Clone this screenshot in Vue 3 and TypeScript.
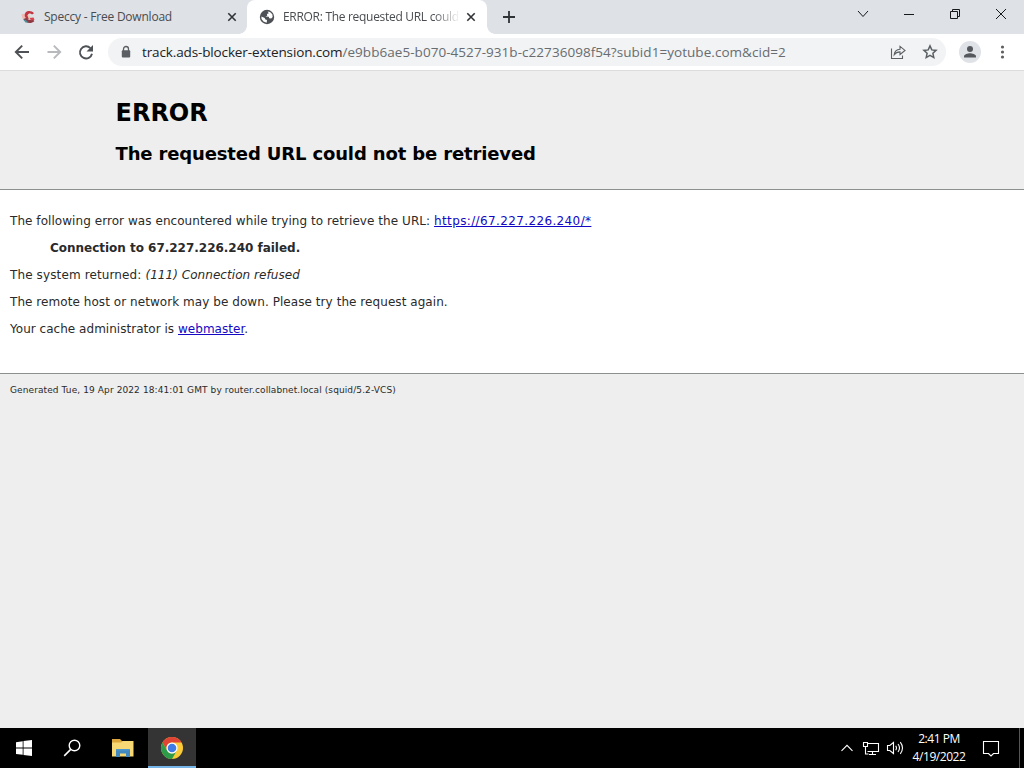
<script setup lang="ts">
interface Tab {
  title: string
  active: boolean
}

const tabs: Tab[] = [
  { title: 'Speccy - Free Download', active: false },
  { title: 'ERROR: The requested URL could', active: true },
]
const host = 'track.ads-blocker-extension.com'
const path = '/e9bb6ae5-b070-4527-931b-c22736098f54?subid1=yotube.com&cid=2'
</script>

<template>
  <div class="screen">
    <header class="tabstrip">
      <div v-for="tab in tabs" :key="tab.title" class="tab" :class="{ active: tab.active }">
        <svg v-if="tab.active" class="favicon" viewBox="0 0 16 16">
          <circle cx="8" cy="8" r="7.2" fill="#4d5156" />
          <path d="M8.600 2.500 9.800 4.300 8 5 8.200 6.800 6.400 7.400 9.800 7.800 10.200 9.300 12.200 9.600 13.700 8 13.300 5.200 11 2.900ZM2.400 7.500 5.800 9 6.100 10.200 8 11 7.700 13.700 4.500 12.500 2.500 10Z" fill="#fff" />
        </svg>
        <svg v-else class="favicon" viewBox="0 0 16 16">
          <path d="M1.500 5.500 5 4.500 5.500 11 2.500 9.500Z" fill="#efb9b4" />
          <path d="M14 4.300C12 1.600 7 1 5.300 4 4 6.500 5 9.500 8 10.200L9.500 8.300C7.300 7.600 7.200 5.600 8.500 4.900 9.800 4.200 11.300 4.600 12 5.600Z" fill="#c23542" />
          <path d="M7.500 6.300 9.500 5.800 10.500 8.500 8.300 9Z" fill="#e8d3b0" />
          <path d="M3.500 10C5.500 14.500 11 15.300 14.300 12.300L13 10.300C10.500 11.800 8 11 6.500 8.800Z" fill="#8e3943" />
          <path d="M9.500 9 13.500 8.600 14.500 10.800 11 11.500Z" fill="#d7424d" />
          <path d="M3 10.300 5.500 10.800 8.500 13.600 5.500 13.400Z" fill="#489198" />
        </svg>
        <span class="tab-title">{{ tab.title }}</span>
        <svg class="tab-close" viewBox="0 0 10 10"><path d="m1.300 1.300 7.400 7.400m0-7.400-7.400 7.400" /></svg>
      </div>
      <svg class="new-tab" viewBox="0 0 14 14"><path d="M7 1v12M1 7h12" /></svg>
      <div class="window-controls">
        <svg viewBox="0 0 46 34"><path d="m18 11 5 5.500 5-5.500" /></svg>
        <svg viewBox="0 0 46 34"><path d="M18 14.500h10" /></svg>
        <svg viewBox="0 0 46 34"><path d="M18.500 11.500h7v7h-7zM20.500 11.500v-2h7v7h-2" /></svg>
        <svg viewBox="0 0 46 34"><path d="m18 9 10 10m0-10L18 19" /></svg>
      </div>
    </header>

    <nav class="toolbar">
      <svg class="nav-icon" viewBox="0 0 32 36"><path d="M29 18H16m6.200-6.400L15.800 18l6.400 6.400" /></svg>
      <svg class="nav-icon faded" viewBox="0 0 32 36"><path d="M15.500 18H28.500m-6.700-6.400 6.400 6.400-6.400 6.400" /></svg>
      <svg class="nav-icon" viewBox="0 0 32 36"><path d="M26.400 14.100A6.100 6.100 0 1 0 28 19.800" /><path d="M29 11v6.500h-6.500Z" class="solid" /></svg>
      <div class="omnibox">
        <svg class="lock" viewBox="0 0 10 14"><path d="M2.500 6V4a2.500 2.500 0 0 1 5 0v2" fill="none" stroke="#5b5f63" stroke-width="1.300" /><rect x=".8" y="5.300" width="8.400" height="7.200" rx="1" fill="#5b5f63" /></svg>
        <span class="url"><span class="host">{{ host }}</span><span class="path">{{ path }}</span></span>
        <svg class="share" viewBox="0 0 16 16"><path d="M1.500 4.500v10h11v-3" /><path d="M4.200 10.800C4.500 7.400 6.600 5.400 10 5.200V2.300L15 6.400 10 10.500V7.900C7.400 7.900 5.600 8.800 4.200 10.800Z" /></svg>
        <svg class="star" viewBox="0 0 16 16"><path d="m8 1.900 1.800 4 4.300.5-3.200 2.900.9 4.300L8 11.400l-3.800 2.200.9-4.300-3.200-2.900 4.300-.5Z" /></svg>
      </div>
      <svg class="avatar" viewBox="0 0 22 22"><circle cx="11" cy="11" r="11" fill="#dfe2e7" /><circle cx="11" cy="8" r="3" fill="#55595e" /><path d="M5 16.500v-1.300c0-2 4-3 6-3s6 1 6 3v1.300Z" fill="#55595e" /></svg>
      <svg class="menu" viewBox="0 0 6 16"><circle cx="2.500" cy="3" r="1.600" /><circle cx="2.500" cy="8" r="1.600" /><circle cx="2.500" cy="13" r="1.600" /></svg>
    </nav>

    <main class="page">
      <section class="titles">
        <h1>ERROR</h1>
        <h2>The requested URL could not be retrieved</h2>
      </section>
      <section class="content">
        <p><span class="lead">The following error was encountered while trying to retrieve the URL: </span><a class="target">https://67.227.226.240/*</a></p>
        <blockquote>Connection to 67.227.226.240 failed.</blockquote>
        <p><span class="returned">The system returned: </span><i>(111) Connection refused</i></p>
        <p class="remote">The remote host or network may be down. Please try the request again.</p>
        <p class="admin">Your cache administrator is <a>webmaster</a>.</p>
      </section>
      <footer>Generated Tue, 19 Apr 2022 18:41:01 GMT by router.collabnet.local (squid/5.2-VCS)</footer>
    </main>

    <div class="taskbar">
      <div class="task">
        <svg viewBox="0 0 48 40"><path d="M16 14.200 22.700 13.300v6.300H16ZM23.500 13.100 32 12v7.600h-8.500ZM16 20.500h6.700v6.300L16 25.900ZM23.500 20.500H32V28l-8.500-1.100Z" fill="#fff" /></svg>
      </div>
      <div class="task">
        <svg viewBox="0 0 48 40"><circle cx="26.500" cy="17.500" r="5.300" fill="none" stroke="#fff" stroke-width="1.400" /><path d="m22.700 21.400-6.500 6.500" stroke="#fff" stroke-width="1.500" /></svg>
      </div>
      <div class="task explorer">
        <svg viewBox="0 0 48 40"><path d="M13 11h8l2 2h11v4H13Z" fill="#dca63c" /><path d="M13 14.500h9l2-1.500h10.500v15.500H13Z" fill="#f8d775" /><path d="M17 29v-7a1 1 0 0 1 1-1h12a1 1 0 0 1 1 1v7h-4v-3.500h-6V29Z" fill="#4289bf" /><path d="M17.500 21h13v1.500h-13Z" fill="#4c98ce" /></svg>
      </div>
      <div class="task running">
        <svg viewBox="0 0 48 40">
          <circle cx="24" cy="20" r="11" fill="#fbcb37" />
          <path d="M14.470 14.500A11 11 0 0 1 33.530 14.500H24A5.500 5.500 0 0 0 19.240 22.750Z" fill="#df4435" />
          <path d="M14.470 14.500A11 11 0 0 0 24 31L28.760 22.750A5.500 5.500 0 0 1 19.240 22.750Z" fill="#2c9b4a" />
          <circle cx="24" cy="20" r="5.500" fill="#fff" /><circle cx="24" cy="20" r="4.300" fill="#3e7be6" />
        </svg>
      </div>
      <div class="tray">
        <svg class="tray-up" viewBox="0 0 14 20"><path d="m1.500 12.800 5.500-5.500 5.500 5.500" /></svg>
        <svg class="tray-net" viewBox="0 0 18 20"><path d="M5.500 5.500h11v8h-11M7 16.500h7M10.500 13.500v3M1.500 4.500h4v4h-4zM3.500 8.500v7.500h3" /></svg>
        <svg class="tray-volume" viewBox="0 0 18 20"><path d="M1.500 7.500h2.300L7.500 4.500v11l-3.700-3H1.500ZM9.700 7.800q1.500 2.200 0 4.400M12 6q3 4 0 8M14.300 4.200q4.400 5.800 0 11.600" /></svg>
        <div class="clock"><span class="time">2:41 PM</span><span class="date">4/19/2022</span></div>
        <svg class="tray-note" viewBox="0 0 18 20"><path d="M1.500 3.500h15v12h-5L9 18l-2.500-2.500h-5Z" /></svg>
        <div class="peek"></div>
      </div>
    </div>
  </div>
</template>

<style>
html,
body {
  margin: 0;
  overflow: hidden;
}
</style>

<style scoped>
* {
  box-sizing: border-box;
}
.screen {
  width: 1024px;
  height: 768px;
  display: flex;
  flex-direction: column;
  overflow: hidden;
  font-family: "Open Sans", "Noto Sans", sans-serif;
}
svg {
  flex: none;
  display: block;
}
.tabstrip {
  height: 34px;
  flex: none;
  display: flex;
  background: #dee1e6;
}
.tab {
  position: relative;
  width: 240px;
  height: 34px;
  padding: 0 11px 0 12px;
  display: flex;
  align-items: center;
  color: #494c50;
}
.tab:first-child {
  width: 247px;
  padding: 0 10px 0 20px;
}
.tab.active {
  background: #fff;
  border-radius: 8px 8px 0 0;
}
.tab.active::before,
.tab.active::after {
  content: "";
  position: absolute;
  bottom: 0;
  width: 8px;
  height: 8px;
}
.tab.active::before {
  left: -8px;
  background: radial-gradient(circle at 0 0, transparent 7.500px, #fff 8px);
}
.tab.active::after {
  right: -8px;
  background: radial-gradient(circle at 100% 0, transparent 7.500px, #fff 8px);
}
.favicon {
  width: 16px;
  height: 16px;
}
.tab-title {
  width: 176px;
  margin-left: 8px;
  font-size: 12px;
  line-height: 18px;
  white-space: nowrap;
  letter-spacing: -0.22px;
  overflow: hidden;
}
.active .tab-title {
  letter-spacing: -0.3px;
  mask-image: linear-gradient(to right, #000 150px, transparent 177px);
}
.tab-close {
  width: 10px;
  height: 10px;
  margin-left: auto;
  fill: none;
  stroke: #303336;
  stroke-width: 1.600;
}
.new-tab {
  width: 14px;
  height: 14px;
  margin: 10px 0 0 15px;
  stroke: #303336;
  stroke-width: 1.800;
}
.window-controls {
  margin-left: auto;
  display: flex;
}
.window-controls svg {
  width: 46px;
  height: 34px;
  fill: none;
  stroke: #16181a;
  stroke-width: 1;
}
.toolbar {
  height: 37px;
  flex: none;
  display: flex;
  align-items: center;
  background: #fff;
  border-bottom: 1px solid #dcdcdc;
}
.nav-icon {
  width: 32px;
  height: 36px;
  fill: none;
  stroke: #4e5155;
  stroke-width: 1.900;
}
.nav-icon .solid {
  fill: #4e5155;
  stroke: none;
}
.nav-icon.faded {
  stroke: #b7b9bc;
}
.omnibox {
  width: 838px;
  height: 28px;
  margin-left: 12px;
  padding: 0 8px 0 13px;
  display: flex;
  align-items: center;
  border-radius: 14px;
  background: #f1f3f4;
}
.lock {
  width: 10px;
  height: 14px;
}
.url {
  margin-left: 11px;
  font-size: 13.500px;
  line-height: 20px;
  white-space: nowrap;
}
.host {
  color: #202124;
  letter-spacing: -0.13px;
}
.path {
  color: #686c70;
  letter-spacing: 0.05px;
}
.share,
.star {
  width: 16px;
  height: 16px;
  fill: none;
  stroke: #5c6064;
}
.share {
  margin-left: auto;
  stroke-width: 1.100;
}
.star {
  margin-left: 16px;
  stroke-width: 1.500;
}
.avatar {
  width: 22px;
  height: 22px;
  margin-left: 13px;
}
.menu {
  width: 6px;
  height: 16px;
  margin-left: 19px;
  fill: #5c6064;
}
.page {
  flex: 1;
  background: #eee;
  font-family: "DejaVu Sans", sans-serif;
  color: #2a2a2a;
}
.titles {
  height: 119px;
  padding: 25px 0 0 115.500px;
  border-bottom: 1px solid #8c8f8f;
  color: #000;
}
h1,
h2,
p,
blockquote {
  margin: 0;
  white-space: nowrap;
}
h1 {
  font-size: 24px;
  line-height: 34px;
}
h2 {
  margin-top: 13px;
  font-size: 18px;
  line-height: 22px;
  letter-spacing: -0.14px;
}
.content {
  height: 184px;
  padding: 24px 10px 0;
  display: flex;
  flex-direction: column;
  gap: 12px;
  background: #fff;
  border-bottom: 1px solid #8c8f8f;
  font-size: 12px;
  line-height: 15px;
}
p {
  white-space: pre-wrap;
}
.lead,
.remote {
  letter-spacing: 0.06px;
}
.target {
  letter-spacing: 0.37px;
}
.returned {
  letter-spacing: 0.12px;
}
i {
  letter-spacing: 0.05px;
}
.admin {
  letter-spacing: 0.03px;
}
blockquote {
  padding-left: 40px;
  font-weight: 700;
  letter-spacing: -0.02px;
}
a {
  color: #1408c4;
  text-decoration: underline;
}
footer {
  padding: 10px 10px 0;
  font-size: 9px;
  line-height: 13px;
  white-space: nowrap;
  letter-spacing: 0.1px;
}
.taskbar {
  height: 40px;
  flex: none;
  display: flex;
  background: #000;
}
.task {
  width: 48px;
  height: 40px;
}
.explorer {
  margin-left: 3px;
  width: 49px;
}
.task svg {
  width: 48px;
  height: 40px;
}
.running {
  background: linear-gradient(#343434 38px, #75b5e8 38px);
}
.tray {
  margin-left: auto;
  display: flex;
  align-items: center;
  color: #fff;
}
.tray > svg {
  height: 20px;
  fill: none;
  stroke: #fff;
  stroke-width: 1.100;
}
.tray-up {
  width: 14px;
}
.tray-net {
  width: 18px;
  margin-left: 8px;
}
.tray-volume {
  width: 18px;
  margin-left: 6px;
}
.clock {
  width: 70px;
  display: flex;
  flex-direction: column;
  align-items: center;
  font-size: 12px;
  line-height: 18px;
  letter-spacing: -0.45px;
  white-space: nowrap;
}
.tray-note {
  width: 18px;
  margin-left: 8px;
}
.peek {
  width: 5px;
  height: 40px;
  margin-left: 19px;
  border-left: 1px solid #555;
}
</style>
